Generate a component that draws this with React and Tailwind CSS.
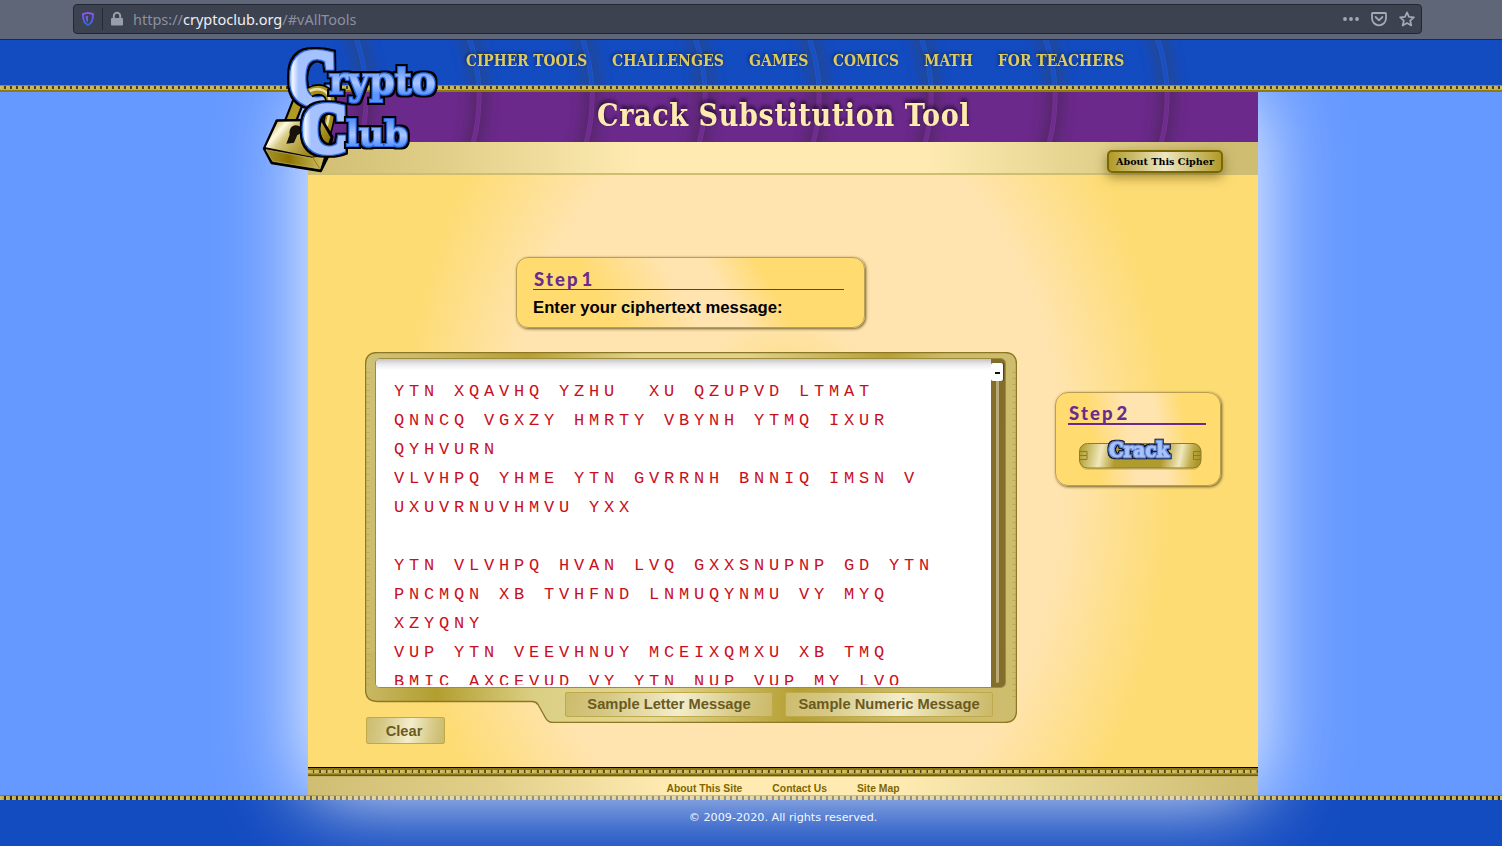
import React from "react";

const NAV = [
  { label: "CIPHER TOOLS", box: "w-[121px]", fit: "scale-x-[0.898]" },
  { label: "CHALLENGES", box: "w-[112px]", fit: "scale-x-[0.922]" },
  { label: "GAMES", box: "w-[59px]", fit: "scale-x-[0.918]" },
  { label: "COMICS", box: "w-[66px]", fit: "scale-x-[0.905]" },
  { label: "MATH", box: "w-[49px]", fit: "scale-x-[0.908]" },
  { label: "FOR TEACHERS", box: "w-[127px]", fit: "scale-x-[0.908]" },
];

const CIPHERTEXT = [
  "YTN XQAVHQ YZHU  XU QZUPVD LTMAT",
  "QNNCQ VGXZY HMRTY VBYNH YTMQ IXUR",
  "QYHVURN",
  "VLVHPQ YHME YTN GVRRNH BNNIQ IMSN V",
  "UXUVRNUVHMVU YXX",
  "",
  "YTN VLVHPQ HVAN LVQ GXXSNUPNP GD YTN",
  "PNCMQN XB TVHFND LNMUQYNMU VY MYQ",
  "XZYQNY",
  "VUP YTN VEEVHNUY MCEIXQMXU XB TMQ",
  "BMIC AXCEVUD VY YTN NUP VUP MY LVQ",
].join("\n");

const ARC_PEAKS = [366, 479, 592, 705, 819, 931, 1055, 1167];

// Right-hand bulge of a circle of radius 180 whose widest point is (x, 97).
const arcPath = (x) => `M${x - 13.6} 28A180 180 0 0 1 ${x - 13.6} 166`;

function Arcs({ top, height, left, width, line, shade, edge, id }) {
  return (
    <svg
      className="absolute top-0 left-0 h-full w-full"
      viewBox={`${left} ${top} ${width} ${height}`}
      preserveAspectRatio="none"
      fill="none"
      aria-hidden="true"
    >
      <defs>
        <filter id={id} filterUnits="userSpaceOnUse" x="0" y="0" width="1502" height="200">
          <feGaussianBlur stdDeviation="6" />
        </filter>
      </defs>
      {ARC_PEAKS.map((x) => (
        <g key={x}>
          <path d={arcPath(x)} stroke={shade} strokeWidth="20" opacity=".7" filter={`url(#${id})`} />
          <path d={arcPath(x)} stroke={edge} strokeWidth="4.6" />
          <path d={arcPath(x)} stroke={line} strokeWidth="3.6" />
        </g>
      ))}
    </svg>
  );
}

function LogoWord({ x, y, size, length, children }) {
  return (
    <text
      x={x}
      y={y}
      fontSize={size}
      textLength={length}
      lengthAdjust="spacingAndGlyphs"
      fontFamily="'DejaVu Serif',serif"
      fontWeight="700"
      fill="url(#logoBlue)"
      filter="url(#logoOutlineSmall)"
    >
      {children}
    </text>
  );
}

function LogoInitial({ transform }) {
  return (
    <text
      transform={transform}
      fontFamily="'Liberation Serif',serif"
      fontWeight="700"
      fontSize="228"
      fill="url(#logoInitial)"
      stroke="url(#logoInitial)"
      strokeWidth="15"
      filter="url(#logoOutline)"
    >
      C
    </text>
  );
}

function OutlineFilter({ id, inner, outer, innerColor, outerColor }) {
  return (
    <filter id={id} x="-20%" y="-20%" width="140%" height="140%">
      <feMorphology in="SourceAlpha" operator="dilate" radius={outer} result="o" />
      <feFlood floodColor={outerColor} />
      <feComposite in2="o" operator="in" result="outer" />
      <feMorphology in="SourceAlpha" operator="dilate" radius={inner} result="i" />
      <feFlood floodColor={innerColor} />
      <feComposite in2="i" operator="in" result="inner" />
      <feMerge>
        <feMergeNode in="outer" />
        <feMergeNode in="inner" />
        <feMergeNode in="SourceGraphic" />
      </feMerge>
    </filter>
  );
}

function Logo() {
  return (
    <svg className="absolute top-[40px] left-[255px] z-30 h-[136px] w-[190px] overflow-visible" viewBox="0 0 570 408">
      <defs>
        <OutlineFilter id="logoOutline" inner={3} outer={9} innerColor="#2c6ae0" outerColor="#000" />
        <OutlineFilter id="logoOutlineSmall" inner={2.5} outer={9} innerColor="#2a6be6" outerColor="#000" />
        <linearGradient id="logoBlue" x1="0" y1="0" x2="0" y2="1">
          <stop offset="0.2" stopColor="#5a92f5" />
          <stop offset="0.55" stopColor="#a9c6ff" />
          <stop offset="0.8" stopColor="#5b95ff" />
        </linearGradient>
        <linearGradient id="logoInitial" x1="0" y1="0" x2="1" y2="0">
          <stop offset="0" stopColor="#79a5ff" />
          <stop offset="0.08" stopColor="#f3f7ff" />
          <stop offset="0.2" stopColor="#a5c2ff" />
          <stop offset="1" stopColor="#a5c2ff" />
        </linearGradient>
        <linearGradient id="lockFace" x1="0" y1="0" x2="1" y2=".5">
          <stop offset="0" stopColor="#b7a146" />
          <stop offset=".15" stopColor="#d2c374" />
          <stop offset=".28" stopColor="#fffbe4" />
          <stop offset=".42" stopColor="#d6c87f" />
          <stop offset="1" stopColor="#927800" />
        </linearGradient>
        <linearGradient id="lockBase" x1="0" y1="0" x2="1" y2="0">
          <stop offset="0" stopColor="#a8922a" />
          <stop offset=".4" stopColor="#8b7300" />
          <stop offset="1" stopColor="#d0bf62" />
        </linearGradient>
      </defs>
      <path d="M104 250 L136 168" stroke="#000" strokeWidth="38" fill="none" />
      <path d="M104 250 L136 168" stroke="#b09a24" strokeWidth="25" fill="none" />
      <LogoInitial transform="translate(102 188) scale(.87 1)" />
      <path d="M164 157 C190 142 224 150 227 180 C230 215 222 248 212 280" stroke="#000" strokeWidth="34" fill="none" />
      <path d="M164 157 C190 142 224 150 227 180 C230 215 222 248 212 280" stroke="#a58d16" strokeWidth="24" fill="none" />
      <path d="M164 153 C190 140 221 150 224 180 C227 215 219 248 209 280" stroke="#e6dda0" strokeWidth="8" fill="none" />
      <path d="M66 242 L200 240 L231 290 L218 350 L197 392 L50 368 L28 326 Z" fill="#000" stroke="#000" strokeWidth="9" strokeLinejoin="round" />
      <path d="M68 245 L198 243 L226 292 L208 346 L170 350 L32 322 Z" fill="url(#lockFace)" />
      <path d="M33 329 L169 354 L206 351 L195 387 L53 364 Z" fill="url(#lockBase)" stroke="#d5c77a" strokeWidth="2" />
      <path d="M174 354 L194 385" stroke="#796400" strokeWidth="2" />
      <path d="M104 284 C101 261 116 250 132 258 C146 265 140 282 127 285 L117 308 L94 311 Z" fill="#17130a" />
      <LogoInitial transform="translate(140 335) scale(.84 .93)" />
      <LogoWord x="221" y="163" size="116" length="322">rypto</LogoWord>
      <LogoWord x="272" y="318" size="108" length="188">lub</LogoWord>
    </svg>
  );
}

function BrowserBar() {
  return (
    <div className="relative z-20 flex h-10 shrink-0 items-start border-b border-[#25282f] bg-[#5f6677] pt-[4px] pl-[73px]">
      <div className="flex h-[30px] w-[1349px] items-center rounded-[4px] border border-[#242731] bg-[#3d4251] pr-[6px] pl-[6px]">
        <svg className="h-4 w-4" viewBox="0 0 16 16" fill="none">
          <defs>
            <linearGradient id="shield" x1="0" y1="0" x2="0" y2="1">
              <stop offset="0" stopColor="#8b54f5" />
              <stop offset="1" stopColor="#3168f0" />
            </linearGradient>
          </defs>
          <path d="M8 1.900 13 3c.2 4.700-.5 9-5 11C3.500 12 2.800 7.700 3 3Z" stroke="url(#shield)" strokeWidth="1.800" strokeLinejoin="round" />
          <path d="M8 4.700v6.500C6 10 5.600 8 5.600 5.200Z" fill="#6b5df3" />
        </svg>
        <div className="ml-[6px] h-[22px] w-px bg-[#262a33]" />
        <svg className="ml-[6px] h-4 w-4" viewBox="0 0 16 16">
          <path d="M4.800 7V5a3.200 3.200 0 0 1 6.400 0v2" fill="none" stroke="#9a9eaa" strokeWidth="2" />
          <rect x="2" y="7" width="12" height="7.500" rx="1" fill="#9a9eaa" />
        </svg>
        <div className="ml-[8px] w-[224px] whitespace-nowrap font-['Noto_Sans',sans-serif] text-[14.500px] leading-5 text-[#8b90a0]">
          https://<span className="text-[#eceef3]">cryptoclub.org</span>/#vAllTools
        </div>
        <div className="ml-auto flex items-center gap-[12px]">
          <svg className="h-4 w-4" viewBox="0 0 16 16" fill="#a5a9b5">
            <circle cx="2" cy="8" r="1.900" />
            <circle cx="8" cy="8" r="1.900" />
            <circle cx="14" cy="8" r="1.900" />
          </svg>
          <svg className="h-4 w-4" viewBox="0 0 16 16" fill="none" stroke="#a5a9b5" strokeWidth="1.800" strokeLinecap="round" strokeLinejoin="round">
            <path d="M1.700 2h12.600c.4 0 .7.300.7.700v4.600a7 7 0 0 1-14 0V2.700c0-.4.300-.7.700-.7Z" />
            <path d="m4.600 6 3.400 3.300L11.400 6" />
          </svg>
          <svg className="h-4 w-4" viewBox="0 0 16 16" fill="none" stroke="#a5a9b5" strokeWidth="1.700" strokeLinejoin="round">
            <path d="m8 1.300 2 4.500 4.900.5-3.700 3.300 1.100 4.900L8 12l-4.300 2.500 1.100-4.900L1.100 6.300 6 5.800Z" />
          </svg>
        </div>
      </div>
    </div>
  );
}

function TopRuler() {
  return (
    <div className="relative z-20 flex h-[7px] shrink-0 flex-col border-t border-[#9c8929] bg-[#c4b04f]">
      <div className="h-[3px] bg-[repeating-linear-gradient(90deg,#cdbd64_0px,#c4b14e_4px,#4d3f14_4.500px,#4d3f14_5.500px,#cdbd64_6px)]" />
      <div className="mt-auto h-[2px] bg-[#917a0c]" />
    </div>
  );
}

function StepHeading({ number }) {
  return (
    <h2 className="flex gap-[2px] pl-px font-[Lato,sans-serif] text-[18.500px] leading-[22px] font-black tracking-[2.100px] text-[#6a2b8e]">
      <span>Step</span>
      <span>{number}</span>
    </h2>
  );
}

function GoldButton({ className, children }) {
  return (
    <button
      className={`flex items-center justify-center rounded-[2px] border border-[#bfa94a] bg-[linear-gradient(100deg,#cdbc6c_0%,#d5c885_20%,#f3edcb_55%,#d9cd8d_80%,#cbb968_100%)] font-['Liberation_Sans',sans-serif] text-[14.700px] leading-none font-bold whitespace-nowrap text-[#6b5a1f] ${className}`}
    >
      {children}
    </button>
  );
}

function CrackButton() {
  return (
    <svg className="mt-[10px] ml-[10px] h-[38px] w-[126px] overflow-visible" viewBox="0 0 126 38">
      <defs>
        <OutlineFilter id="crackOutline" inner={0.6} outer={2.4} innerColor="#5f86dc" outerColor="#0b1130" />
        <linearGradient id="crackBar" x1="0" y1="0" x2="1" y2=".04">
          <stop offset="0" stopColor="#ad9828" />
          <stop offset=".08" stopColor="#c8b860" />
          <stop offset=".19" stopColor="#f0e8bd" />
          <stop offset=".32" stopColor="#b09b2e" />
          <stop offset=".7" stopColor="#b09b2e" />
          <stop offset=".85" stopColor="#f0e8bd" />
          <stop offset=".94" stopColor="#c0ae4d" />
          <stop offset="1" stopColor="#ab962b" />
        </linearGradient>
      </defs>
      <rect x="1.500" y="8.500" width="121.500" height="24.500" rx="8" fill="#8b7520" opacity=".25" transform="translate(0 2)" />
      <rect x="1.500" y="8.500" width="121.500" height="24.500" rx="8" fill="url(#crackBar)" stroke="#8f7b24" />
      <path d="M1.500 16.500h7.500v8H1.500M1.500 20.500h7.500M123 16.500h-7.500v8h7.500M123 20.500h-7.500" fill="none" stroke="#8f7b24" />
      <text
        x="31"
        y="22"
        fontFamily="'DejaVu Serif',serif"
        fontWeight="700"
        fontSize="20.500"
        textLength="60"
        lengthAdjust="spacingAndGlyphs"
        fill="#a9c2f7"
        stroke="#a9c2f7"
        strokeWidth=".6"
        filter="url(#crackOutline)"
      >
        Crack
      </text>
    </svg>
  );
}

function MessageFrame() {
  const outline = "M12.500 .5H639.500Q651.500 .5 651.500 12.500V358.500Q651.500 370.500 639.500 370.500H188Q182.500 370.500 180 365L173 352.500Q171 349.500 167 349.500H12.500Q.5 349.500 .5 337.500V12.500Q.5 .5 12.500 .5Z";
  return (
    <div className="relative mt-[24px] flex h-[371px] w-[652px] flex-col pt-[6px] pl-[10px]">
      <svg className="absolute top-0 left-0 h-full w-full" viewBox="0 0 652 371" aria-hidden="true">
        <defs>
          <linearGradient id="frameGold" gradientUnits="userSpaceOnUse" x1="0" y1="0" x2="640" y2="90">
            <stop offset="0" stopColor="#cfc176" />
            <stop offset=".08" stopColor="#cbbb68" />
            <stop offset=".25" stopColor="#b5a033" />
            <stop offset=".42" stopColor="#dfd38b" />
            <stop offset=".58" stopColor="#e0d48d" />
            <stop offset=".8" stopColor="#b6a135" />
            <stop offset=".89" stopColor="#cbbb68" />
            <stop offset="1" stopColor="#cdbd6d" />
          </linearGradient>
          <linearGradient id="frameGoldLow" gradientUnits="userSpaceOnUse" x1="0" y1="330" x2="652" y2="371">
            <stop offset="0" stopColor="#c9b965" />
            <stop offset=".11" stopColor="#b39e30" />
            <stop offset=".26" stopColor="#dbcf84" />
            <stop offset=".45" stopColor="#e3d892" />
            <stop offset=".66" stopColor="#b5a033" />
            <stop offset=".82" stopColor="#cbbb68" />
            <stop offset="1" stopColor="#cdbd6d" />
          </linearGradient>
          <clipPath id="frameLower">
            <rect x="0" y="300" width="652" height="71" />
          </clipPath>
        </defs>
        <path d={outline} fill="url(#frameGold)" />
        <path d={outline} fill="url(#frameGoldLow)" clipPath="url(#frameLower)" />
        <path d={outline} fill="none" stroke="#8d7726" strokeWidth="1.400" />
        <path d="M3 20V335M649 20V350" stroke="#a28d39" strokeWidth="3" strokeDasharray="1 5" opacity=".4" />
      </svg>
      <div className="relative flex h-[330px] w-[631px] overflow-hidden rounded-[5px] border border-[#a08b3c] bg-white">
        <div className="h-full w-[615px] shrink-0 overflow-hidden bg-[linear-gradient(180deg,#c4c4c8_0px,#e9e9eb_5px,#ffffff_11px)] pt-[18px] pl-[18px]">
          <div className="h-[308px] overflow-hidden font-['Liberation_Mono',monospace] text-[17px] leading-[29px] tracking-[4.798px] whitespace-pre text-[#c90f1d]">
            {CIPHERTEXT}
          </div>
        </div>
        <div className="flex h-full w-[14px] flex-col bg-[#846e2c] pt-[4px]">
          <div className="flex h-[18px] w-[12px] items-center justify-center rounded-[2px] bg-white shadow-[1px_0_1px_#4b3e17]">
            <div className="mt-[2px] h-[2px] w-[5px] bg-[#111]" />
          </div>
          <div className="ml-[5px] h-[302px] w-[3px] rounded-b bg-[#b9a878]" />
        </div>
      </div>
      <div className="relative mt-[4px] ml-[190px] flex gap-[12px]">
        <GoldButton className="h-[25px] w-[208px]">Sample Letter Message</GoldButton>
        <GoldButton className="h-[25px] w-[208px]">Sample Numeric Message</GoldButton>
      </div>
    </div>
  );
}

export default function App() {
  return (
    <div className="relative flex h-[846px] w-[1502px] flex-col overflow-hidden bg-[#6699ff]">
      <BrowserBar />

      <header className="relative z-20 h-[45px] shrink-0 bg-[#134bc1]">
        <Arcs id="blurBlue" top={40} left={0} width={1502} height={45} line="#174fc4" shade="#27468c" edge="#2b5cc4" />
        <nav className="relative flex gap-[25px] pt-[9px] pl-[466px]">
          {NAV.map((item) => (
            <div key={item.label} className={`flex h-[22px] ${item.box}`}>
              <a className={`origin-left font-['DejaVu_Serif_Condensed','DejaVu_Serif',serif] text-[17px] leading-[22px] font-bold whitespace-nowrap text-[#dccb62] [text-shadow:-1px_-1px_4px_rgba(0,0,0,0.5)] ${item.fit}`}>
                {item.label}
              </a>
            </div>
          ))}
        </nav>
      </header>

      <TopRuler />
      <Logo />

      <div className="relative z-10 flex h-[703px] shrink-0 pl-[308px]">
        <article className="flex w-[950px] flex-col bg-[#fddc73] shadow-[0_0_80px_0_#ffffff]">
          <div className="relative flex h-[50px] shrink-0 justify-center overflow-hidden bg-[#6b298b]">
            <Arcs id="blurPurple" top={92} left={308} width={950} height={50} line="#6e2c8e" shade="#532766" edge="#7a3893" />
            <div className="relative flex w-[373px] pt-[2px]">
              <h1 className="origin-left scale-x-[0.940] font-['DejaVu_Serif_Condensed','DejaVu_Serif',serif] text-[32px] leading-[43px] font-bold tracking-[0.640px] whitespace-nowrap text-[#ffeab0] [text-shadow:0px_-3px_4px_rgba(0,0,0,0.65)]">
                Crack Substitution Tool
              </h1>
            </div>
          </div>

          <div className="flex h-[33px] shrink-0 items-start justify-end border-b-2 border-[#cfbd72] bg-[linear-gradient(90deg,#cfbe72_0%,#e2d08a_15%,#ffebb2_35%,#ffebb2_65%,#e5d591_80%,#cfbd72_95%)] pt-[8px] pr-[35px]">
            <button className="relative flex h-[23px] w-[116px] items-center justify-center rounded-[5px] border-2 border-[#7d6700] bg-[linear-gradient(90deg,#b09a29,#ede7c3_50%,#b09a29)] font-['DejaVu_Serif',serif] text-[9.600px] leading-none font-bold whitespace-nowrap text-black shadow-[0_4px_12px_rgba(80,65,0,0.55)]">
              About This Cipher
            </button>
          </div>

          <main className="flex h-[592px] shrink-0 items-start bg-[radial-gradient(ellipse_395px_540px_at_477px_300px,#fddc73_0%,#fddc73_12%,#ffe4b0_30%,#ffe4b0_70%,#fddc73_98%)] pl-[57px]">
            <div className="flex w-[652px] flex-col">
              <section className="mt-[82px] ml-[151px] flex h-[71px] w-[349px] flex-col rounded-[12px] border border-[#b99f55] bg-[linear-gradient(60deg,#ffdb70_25%,#ffe4b0_48%,#ffe4b0_58%,#ffdb70_72%)] px-[16px] pt-[10px] shadow-[1px_1px_3px_#6d5c2a]">
                <StepHeading number="1" />
                <div className="-mt-px h-px w-[311px] shrink-0 bg-[#6a2b8e]" />
                <p className="mt-[8px] font-['Liberation_Sans',sans-serif] text-[16.700px] leading-[20px] font-bold whitespace-nowrap text-black">
                  Enter your ciphertext message:
                </p>
              </section>
              <MessageFrame />
              <GoldButton className="-mt-[6px] ml-px h-[27px] w-[79px]">
                <span className="pt-px pr-[3px]">Clear</span>
              </GoldButton>
            </div>
            <section className="mt-[217px] ml-[38px] flex h-[94px] w-[166px] flex-col rounded-[13px] border border-[#b99f55] bg-[linear-gradient(80deg,#ffdb70_25%,#ffe4b0_46%,#ffe4b0_62%,#ffdb70_78%)] px-[12px] pt-[9px] shadow-[1px_1px_3px_#6d5c2a]">
              <StepHeading number="2" />
              <div className="-mt-px h-[2px] w-[138px] shrink-0 bg-[#6a2b8e]" />
              <CrackButton />
            </section>
          </main>

          <footer className="flex grow flex-col bg-[linear-gradient(90deg,#cfbe72_0%,#e2d08a_20%,#ffebb2_38%,#ffebb2_62%,#e5d591_80%,#cfbd72_98%)]">
            <div className="flex h-[9px] shrink-0 flex-col border-t border-black bg-[#8c7716]">
              <div className="mt-[2px] h-[4px] border-b border-[#a8953a] bg-[repeating-linear-gradient(90deg,#d6c66c_0px,#c2ae4b_4.500px,#54451a_5px,#54451a_6px,#d6c66c_6.600px)]" />
              <div className="mt-auto h-px bg-[#6d5a05]" />
            </div>
            <div className="h-px bg-[#c5b36a]" />
            <div className="flex justify-center gap-[30px] pt-[6px] font-['Liberation_Sans',sans-serif] text-[10.350px] leading-[12px] font-bold text-[#7d6600]">
              <a>About This Site</a>
              <a>Contact Us</a>
              <a>Site Map</a>
            </div>
          </footer>
        </article>
      </div>

      <div className="h-[5px] shrink-0 border-t border-[#8f7d22] bg-[repeating-linear-gradient(90deg,#cdbd64_0px,#bda842_4px,#3a2a0c_4.500px,#3a2a0c_5.500px,#cdbd64_6px)]" />
      <div className="flex grow justify-center bg-[#134bc1] pl-[64px]">
        <p className="relative z-20 pt-[11px] font-['DejaVu_Sans',sans-serif] text-[11.200px] leading-[14px] text-[#f4f7ff]">
          © 2009-2020. All rights reserved.
        </p>
      </div>
    </div>
  );
}
